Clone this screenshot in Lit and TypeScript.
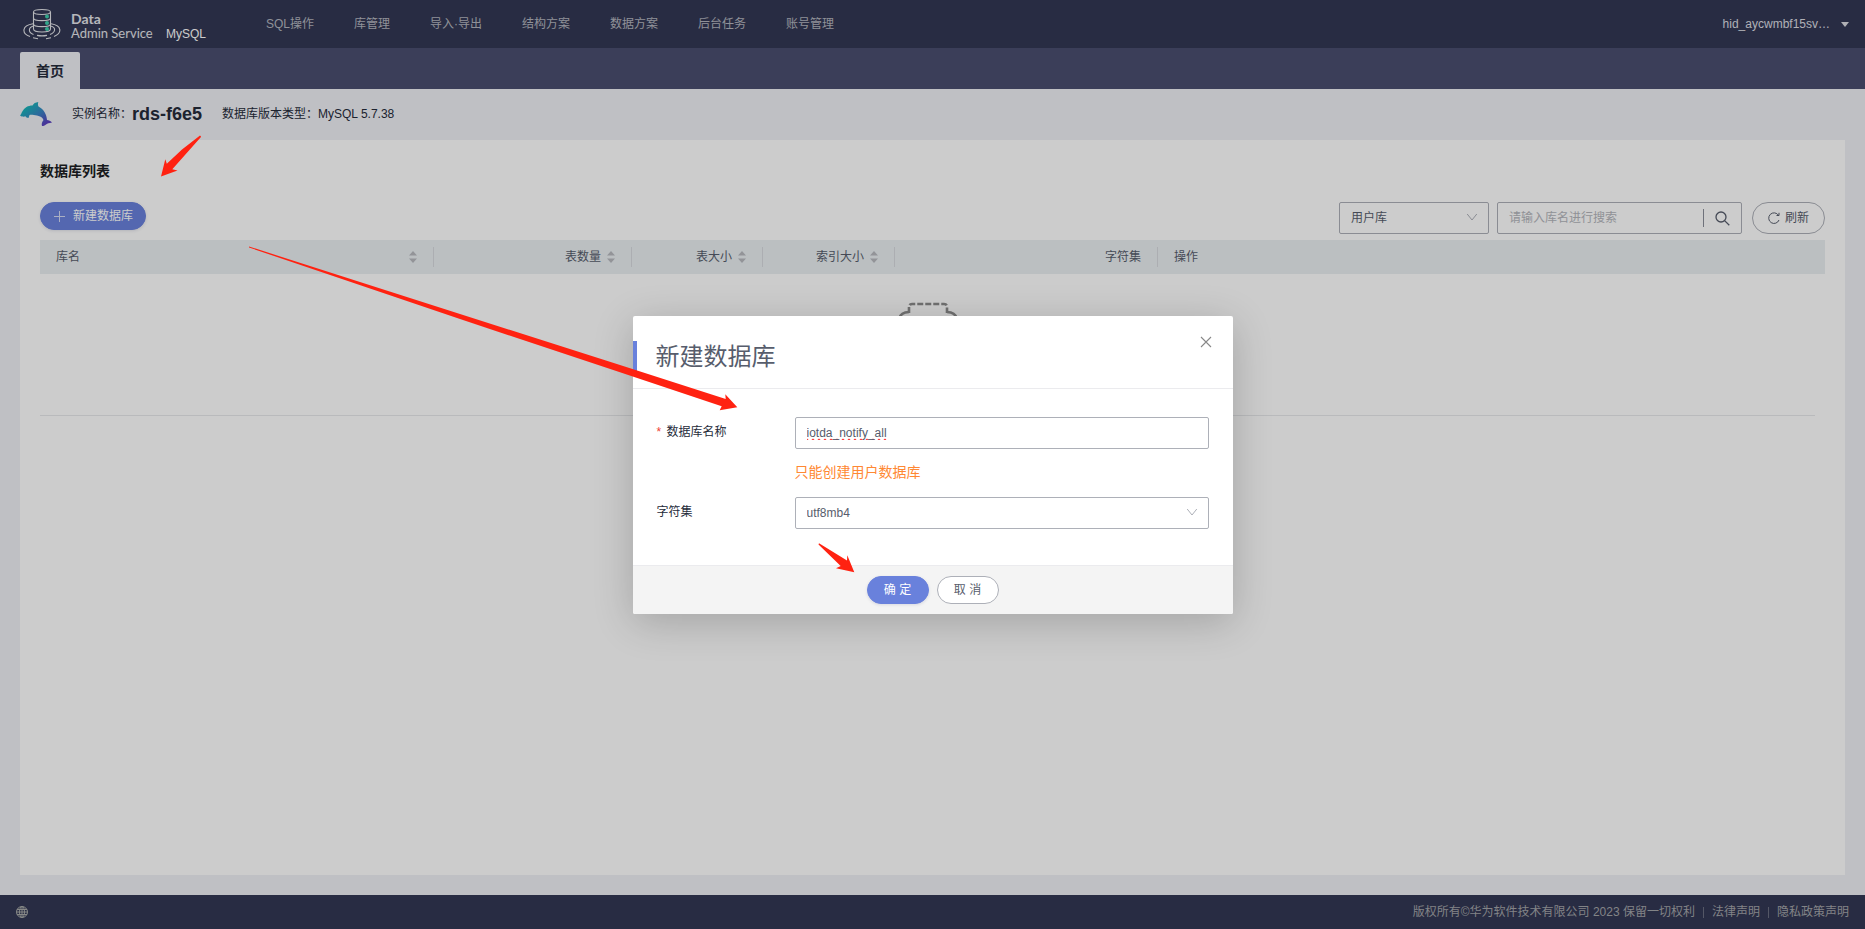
import { LitElement, html, css, svg } from "lit";
import { customElement, state } from "lit/decorators.js";

const NAV = ["SQL操作", "库管理", "导入·导出", "结构方案", "数据方案", "后台任务", "账号管理"];

interface Column {
  label: string;
  width: number;
  sortable: boolean;
  align: "start" | "end" | "spread";
}

const COLUMNS: Column[] = [
  { label: "库名", width: 394, sortable: true, align: "spread" },
  { label: "表数量", width: 198, sortable: true, align: "end" },
  { label: "表大小", width: 131, sortable: true, align: "end" },
  { label: "索引大小", width: 132, sortable: true, align: "end" },
  { label: "字符集", width: 263, sortable: false, align: "end" },
  { label: "操作", width: 667, sortable: false, align: "start" },
];
const TOTAL = COLUMNS.reduce((sum, c) => sum + c.width, 0);

const chevron = html`<svg class="chevron" width="12" height="8" viewBox="0 0 12 8" aria-hidden="true">
  <path d="M1.2 1 L6 7 L10.8 1" fill="none" stroke="currentColor" stroke-width="1" />
</svg>`;

const logo = html`<svg class="logo" width="38" height="32" viewBox="0 0 38 32" aria-hidden="true">
  <g fill="none" stroke="#e4e5ea" stroke-width="1.100">
    <ellipse cx="19" cy="4" rx="8.500" ry="2.500" />
    <path d="M10.500 4 V21 C10.500 25 27.500 25 27.500 21 V4" />
    <path d="M10.500 10 C10.500 13.500 27.500 13.500 27.500 10 M10.500 16 C10.500 19.500 27.500 19.500 27.500 16" />
    <path d="M10.500 18 C5 19.500 5 24.500 10.500 26.500 M27.500 18 C33.500 19.500 32.500 24.500 27 26.500 M14 27.400 C17 28 21 28 24 27.400" />
    <path d="M10 15.800 C-1.500 17.500 -1.500 25.500 7 28.500 M28 15.800 C39.500 17.500 39 25.500 31 28.500 M10 29.700 L15 30.700 M23 30.700 L28 29.700" />
  </g>
  <g fill="#3fd0ae"><circle cx="24" cy="8.500" r="2" /><circle cx="24" cy="15" r="2" /><circle cx="24" cy="21" r="2" /></g>
</svg>`;

const dolphin = html`<svg class="dolphin" width="32" height="26" viewBox="0 0 32 26" aria-hidden="true">
  <defs>
    <linearGradient id="sea" x1="0" y1="0" x2="1" y2="1">
      <stop offset="0.2" stop-color="#16b5b8" /><stop offset="0.55" stop-color="#3a83c4" /><stop offset="0.85" stop-color="#5a42c0" />
    </linearGradient>
  </defs>
  <path fill="url(#sea)" d="M0 14.500 C1 13.800 1.300 12.500 2 11 C4.500 6.500 8 4.500 12.500 4.500 C13.500 2.500 15.500 1.300 18.300 1 C17.800 2.800 17.800 4 18.500 5.500 C24 8.500 26.500 13 27 19 C28.500 19.500 31 19.800 32 21.500 C29 22 27.500 22.500 26 23.500 C24.500 24.500 23.500 25 22 25 C21.300 23 22 21 23.500 19 C22.500 16.500 20.500 15.200 17 14.500 C14 14 11 13.500 9.500 14 L8.500 17 C7 17 6 16.500 5.500 15.300 C4 15.800 2 16 0 14.500 Z" />
</svg>`;

const emptyBox = html`<svg class="empty-art" width="60" height="64" viewBox="0 0 60 64" aria-hidden="true">
  <g fill="none" stroke="#8c8c8c" stroke-width="2.600">
    <path d="M11 11 V5 Q11 2 14 2 H46 Q49 2 49 5 V11" stroke-dasharray="6 2" />
    <path d="M11 10 Q2 10 1 18 V50 Q2 58 10 58 H50 Q58 58 59 50 V18 Q58 10 49 10" />
  </g>
</svg>`;

@customElement("app-root")
export class AppRoot extends LitElement {
  @state() private name = "iotda_notify_all";

  static styles = css`
    :host {
      display: block;
      position: relative;
      min-height: 100vh;
      font: 12px/20px "Liberation Sans", "Noto Sans CJK SC", sans-serif;
      color: #252b3a;
    }
    * { box-sizing: border-box; }
    button, input, select { font: inherit; color: inherit; margin: 0; }
    a { color: inherit; text-decoration: none; }
    h1, h2 { margin: 0; }
    svg { display: block; flex: none; }

    .page { display: flex; flex-direction: column; min-height: 100vh; background: #eff0f5; }

    .top { display: flex; align-items: center; height: 48px; padding: 0 16px 0 23px; background: #333854; color: #b4b6bf; }
    .brand { display: flex; align-items: center; color: #e4e5ea; gap: 10px; }
    .brand-text { display: flex; align-items: flex-end; gap: 15px; padding-top: 4px; }
    .brand-name { display: flex; flex-direction: column; width: 80px; font: 13px/14px Lato, sans-serif; white-space: nowrap; }
    .brand-name b { font-size: 14px; }
    .engine { line-height: 12px; color: #fff; }
    nav { display: flex; gap: 40px; margin-left: 60px; flex: 1; white-space: nowrap; }
    .user { display: flex; align-items: center; gap: 11px; border: 0; padding: 0; background: none; color: #dcdde3; }
    .caret { border: 4px solid transparent; border-top: 5px solid #dcdde3; border-bottom: 0; }

    .tabs { display: flex; align-items: flex-end; height: 41px; padding: 0 20px; background: #4a4e70; }
    .tab { height: 37px; padding: 0 16px; border: 0; border-radius: 2px 2px 0 0; background: #eff0f5; font-size: 14px; font-weight: bold; }

    .info { display: flex; align-items: center; height: 51px; padding: 0 20px 2px; }
    .info dl { display: flex; align-items: center; margin: 0 0 0 20px; }
    .info dt, .info dd { margin: 0; }
    .info .instance { min-width: 78px; margin-right: 12px; font-size: 18px; font-weight: bold; }

    .panel { flex: 1; margin: 0 20px 20px; padding: 20px; background: #fff; }
    .panel h1 { font-size: 14px; line-height: 22px; font-weight: bold; color: #1c1e24; }
    .tools { display: flex; align-items: flex-start; gap: 8px; height: 38px; margin-top: 20px; }
    .pill { display: inline-flex; align-items: center; justify-content: center; border: 1px solid #adb0b8; border-radius: 16px; background: #fff; color: #575d6c; white-space: nowrap; }
    .pill.primary { border-color: #6981dc; background: #6981dc; color: #fff; box-shadow: 0 1px 3px rgba(60, 70, 120, 0.15); }
    .create { height: 28px; gap: 8px; padding: 0 12px 0 13px; margin-right: auto; }
    .refresh { height: 32px; gap: 5px; padding: 0 15px; margin-left: 2px; }

    .select { position: relative; display: block; color: #575d6c; }
    .select select, .field { appearance: none; width: 100%; height: 32px; padding: 0 11px; border: 1px solid #adb0b8; border-radius: 2px; background: #fff; outline: 0; }
    .select .chevron { position: absolute; right: 11px; top: 11px; color: #adb0b8; pointer-events: none; }
    .scope { width: 150px; }
    .search { display: flex; align-items: center; width: 245px; height: 32px; border: 1px solid #adb0b8; border-radius: 2px; }
    .search input { flex: 1; min-width: 0; border: 0; padding: 0 11px; background: none; outline: 0; }
    .search input::placeholder { color: #b4b6bc; opacity: 1; }
    .search button { height: 18px; padding: 0 11px; border: 0; border-left: 1px solid #8a8e99; background: none; color: #575d6c; }

    table { width: 100%; table-layout: fixed; border-collapse: collapse; }
    th { height: 34px; padding: 0; background: #eaeff2; color: #575d6c; font-weight: normal; }
    .cell { display: flex; align-items: center; gap: 6px; height: 20px; padding: 0 16px; border-right: 1px solid #d7dadf; }
    th:last-child .cell { border-right: 0; }
    .end { justify-content: flex-end; }
    .spread { justify-content: space-between; }
    .empty { display: flex; justify-content: center; height: 142px; padding: 28px 0 0; margin-right: 10px; border-bottom: 1px solid #e8e9ec; }

    .foot { display: flex; align-items: center; justify-content: space-between; height: 34px; padding: 0 16px; background: #333854; color: #a3a5a9; }
    .foot p { display: flex; align-items: center; gap: 8px; margin: 0; }
    .foot .bar { width: 1px; height: 11px; background: #696d80; }

    .mask { position: absolute; inset: 0; display: flex; align-items: center; justify-content: center; background: rgba(0, 0, 0, 0.2); }
    .dialog { width: 600px; background: #fff; border-radius: 2px; box-shadow: 0 8px 40px rgba(0, 0, 0, 0.2); }
    .dialog header { display: flex; align-items: flex-start; justify-content: space-between; height: 73px; padding-right: 21px; border-bottom: 1px solid #ebebee; }
    .dialog h2 { margin-top: 25px; padding-left: 19px; border-left: 4px solid #6981dc; font-size: 24px; line-height: 32px; font-weight: normal; color: #575d6c; }
    .close { margin-top: 20px; padding: 0; border: 0; background: none; color: #888; }
    .form { display: grid; grid-template-columns: 138px 1fr; padding: 28px 24px 36px; }
    .form label { line-height: 30px; }
    .form label i { display: inline-block; width: 10px; font-style: normal; color: #f04134; }
    .field { line-height: 28px; color: #575d6c; text-decoration-line: spelling-error; }
    .hint { grid-column: 2; height: 48px; margin: 0; line-height: 46px; font-size: 14px; color: #ff8833; }
    .dialog footer { display: flex; justify-content: center; gap: 8px; padding: 10px 0; border-top: 1px solid #ebebee; border-radius: 0 0 2px 2px; background: #f4f4f4; }
    .dialog footer .pill { height: 28px; min-width: 62px; padding: 0 14px; }

    .marks { position: absolute; left: 0; top: 0; width: 100%; height: 100%; pointer-events: none; overflow: visible; }
  `;

  private sorter() {
    return html`<svg width="8" height="14" viewBox="0 0 8 14" aria-hidden="true">
      <path d="M4 1 L8 5.500 H0 Z M4 13 L0 8.500 H8 Z" fill="#b8babf" />
    </svg>`;
  }

  render() {
    return html`
      <div class="page">
        <header class="top">
          <div class="brand">
            ${logo}
            <div class="brand-text">
              <span class="brand-name"><b>Data</b><span>Admin Service</span></span>
              <span class="engine">MySQL</span>
            </div>
          </div>
          <nav>${NAV.map((n) => html`<a href="#">${n}</a>`)}</nav>
          <button class="user">hid_aycwmbf15sv…<span class="caret"></span></button>
        </header>
        <div class="tabs"><button class="tab">首页</button></div>
        <section class="info">
          ${dolphin}
          <dl>
            <dt>实例名称：</dt><dd class="instance">rds-f6e5</dd>
            <dt>数据库版本类型：</dt><dd>MySQL 5.7.38</dd>
          </dl>
        </section>
        <main class="panel">
          <h1>数据库列表</h1>
          <div class="tools">
            <button class="pill primary create">
              <svg width="11" height="11" viewBox="0 0 11 11"><path d="M5.500 0 V11 M0 5.500 H11" stroke="#d5dbf4" /></svg>新建数据库
            </button>
            <label class="select scope"><select aria-label="库类型"><option>用户库</option></select>${chevron}</label>
            <div class="search">
              <input aria-label="搜索" placeholder="请输入库名进行搜索" />
              <button aria-label="搜索">
                <svg width="15" height="15" viewBox="0 0 15 15"><g fill="none" stroke="currentColor" stroke-width="1.300"><circle cx="6" cy="6" r="5" /><path d="M9.600 9.600 L14.300 14.300" /></g></svg>
              </button>
            </div>
            <button class="pill refresh">
              <svg width="12" height="12" viewBox="0 0 12 12"><g fill="none" stroke="currentColor"><path d="M11 8 A5.300 5.300 0 1 1 10.500 3.300" /><path d="M11 0.800 V3.500 H8.500" /></g></svg>刷新
            </button>
          </div>
          <table>
            <colgroup>${COLUMNS.map((c) => html`<col style="width:${(c.width / TOTAL) * 100}%" />`)}</colgroup>
            <thead>
              <tr>${COLUMNS.map((c) => html`<th scope="col"><div class="cell ${c.align}">${c.label}${c.sortable ? this.sorter() : ""}</div></th>`)}</tr>
            </thead>
          </table>
          <div class="empty">${emptyBox}</div>
        </main>
        <footer class="foot">
          <svg width="12" height="12" viewBox="0 0 12 12"><g fill="none" stroke="#a9aba9"><circle cx="6" cy="6" r="5.500" /><ellipse cx="6" cy="6" rx="2.500" ry="5.500" /><path d="M1 3.500 H11 M1 8.500 H11 M6 0.500 V11.500 M0.500 6 H11.500" /></g></svg>
          <p>版权所有©华为软件技术有限公司 2023 保留一切权利
            <span class="bar"></span><a href="#">法律声明</a>
            <span class="bar"></span><a href="#">隐私政策声明</a>
          </p>
        </footer>
      </div>
      <div class="mask">
        <section class="dialog" role="dialog" aria-labelledby="title">
          <header>
            <h2 id="title">新建数据库</h2>
            <button class="close" aria-label="关闭"><svg width="12" height="12" viewBox="0 0 12 12"><path d="M1 1 L11 11 M11 1 L1 11" stroke="currentColor" stroke-width="1.100" /></svg></button>
          </header>
          <form class="form">
            <label for="db"><i>*</i>数据库名称</label>
            <input id="db" class="field" .value=${this.name} @input=${(e: Event) => (this.name = (e.target as HTMLInputElement).value)} />
            <p class="hint">只能创建用户数据库</p>
            <label for="charset">字符集</label>
            <span class="select"><select id="charset"><option>utf8mb4</option></select>${chevron}</span>
          </form>
          <footer>
            <button class="pill primary">确 定</button>
            <button class="pill">取 消</button>
          </footer>
        </section>
      </div>
      <svg class="marks" aria-hidden="true">
        <g fill="#ff2211">
          ${svg`<path d="M200 135.500 L201.200 136.700 L172.300 169.300 L177.500 170.500 L161 176.500 L165.300 159.300 L166.800 163.800 L182 149.500 Z" />
          <path d="M249 246.500 L460 314 L620 365 L725.700 399 L725.300 394.300 L737.300 407.300 L719.700 410.300 L721.700 406.300 L620 372.300 L460 319 L249 247.500 Z" />
          <path d="M819 543.300 L847 560.500 L847.300 555.300 L854.300 572.300 L836 568.300 L840.700 566 L818.500 544.500 Z" />`}
        </g>
      </svg>
    `;
  }
}
